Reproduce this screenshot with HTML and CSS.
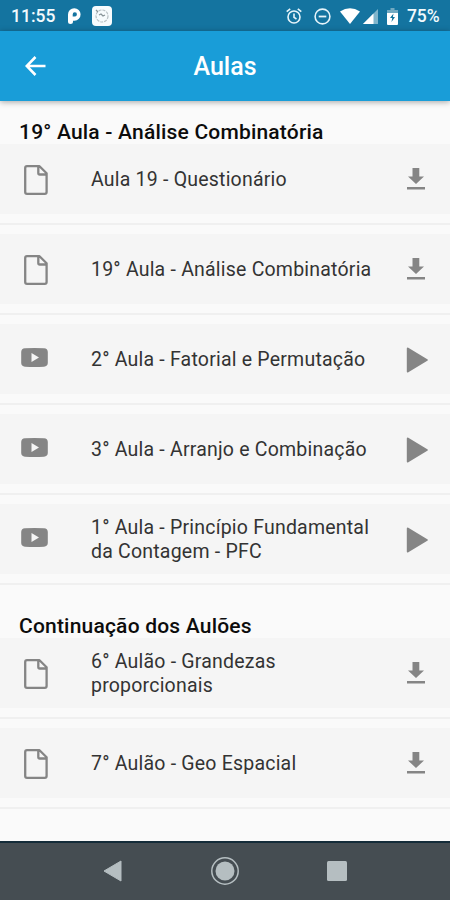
FILE: index.html
```html
<!DOCTYPE html>
<html lang="pt-BR">
<head>
<meta charset="utf-8">
<title>Aulas</title>
<link rel="stylesheet" href="styles.css">
</head>
<body>
<svg class="defs" width="0" height="0" aria-hidden="true">
  <symbol id="doc" viewBox="0 0 24 30"><path d="M3 1.2H15.5L22.6 8.3V27Q22.6 28.8 20.8 28.8H3Q1.2 28.8 1.2 27V3Q1.2 1.2 3 1.2Z M14.3 1.5V8Q14.3 9.5 15.8 9.5H22.3" fill="none" stroke="#858585" stroke-width="2.3" stroke-linejoin="round"/></symbol>
  <symbol id="video" viewBox="0 0 27 19"><path fill-rule="evenodd" d="M4 .3Q13.5-.3 23 .3Q26.7.6 26.8 4V15Q26.7 18.4 23 18.7Q13.5 19.3 4 18.7Q.3 18.4.2 15V4Q.3.6 4 .3ZM10.5 5V14L18 9.5Z" fill="#858585"/></symbol>
  <symbol id="download" viewBox="0 0 18 22"><path d="M5.5 0H12.3V8.5H17L9 16L1 8.5H5.5ZM0 19H18V21.5H0Z" fill="#858585"/></symbol>
  <symbol id="play" viewBox="0 0 22 26"><path d="M1.8 1.5L20.8 13L1.8 24.5Z" fill="#858585" stroke="#858585" stroke-width="2" stroke-linejoin="round"/></symbol>
</svg>
<div class="screen">
  <div class="status">
    <span class="clock">11:55</span>
    <svg class="s-p" viewBox="0 0 13 16"><path fill-rule="evenodd" d="M0 13.5V6.5A6.3 6.3 0 1 1 6.5 12.8H5V13.5A2.5 2.5 0 0 1 0 13.5ZM4.7 8.5H6.5A2.1 2.1 0 1 0 4.7 6.5Z" fill="#fff"/></svg>
    <svg class="s-app" viewBox="0 0 20 20"><rect width="20" height="20" rx="4" fill="#f7fbfd"/><circle cx="10" cy="10" r="6" fill="none" stroke="#b9c1c5" stroke-width="1.2" stroke-dasharray="3 1"/><path d="M4 4L6 6M7 9L9 8L11 10L13 9" fill="none" stroke="#899499" stroke-width="1.3"/></svg>
    <svg class="s-alarm" viewBox="0 0 16 16"><g fill="none" stroke="#e6f4fa" stroke-width="1.6"><circle cx="8" cy="9" r="6"/><path d="M8 5.5V9.3L10.5 11M.7 3.7L4.2.8M15.3 3.7L11.8.8"/></g></svg>
    <svg class="s-dnd" viewBox="0 0 17 17"><g fill="none" stroke="#e6f4fa" stroke-width="1.6"><circle cx="8.5" cy="8.5" r="7.4"/><path d="M4.7 8.5H12.3" stroke-width="1.8"/></g></svg>
    <svg class="s-wifi" viewBox="0 0 20 16"><path d="M0 3.4Q10-3 20 3.4L10 16Z" fill="#fff"/></svg>
    <svg class="s-cell" viewBox="0 0 15 15"><path d="M15 0V15H0Z" fill="#7fb5cc"/><path d="M10.5 4.5V15H0Z" fill="#fff"/></svg>
    <svg class="s-batt" viewBox="0 0 11 17"><path d="M3.5 0H7.5V2H11V5H0V2H3.5Z" fill="#72a9c1"/><path d="M0 5H11V16Q11 17 10 17H1Q0 17 0 16Z" fill="#fff"/><path d="M6.5 5.5L3 10H5.2L4.5 14L8 9H5.9Z" fill="#14739c"/></svg>
    <span class="percent">75%</span>
  </div>
  <header class="appbar">
    <svg class="back" viewBox="0 0 21 20"><path d="M20.5 10H2M10.5 1L1.7 10L10.5 19" fill="none" stroke="#fff" stroke-width="2.6"/></svg>
    <h1>Aulas</h1>
  </header>
  <main>
    <section>
      <h2>19° Aula - Análise Combinatória</h2>
      <ul>
        <li><a class="tile"><svg class="doc"><use href="#doc"/></svg><span>Aula 19 - Questionário</span><svg class="download"><use href="#download"/></svg></a></li>
        <li><a class="tile"><svg class="doc"><use href="#doc"/></svg><span>19° Aula - Análise Combinatória</span><svg class="download"><use href="#download"/></svg></a></li>
        <li><a class="tile"><svg class="video"><use href="#video"/></svg><span>2° Aula - Fatorial e Permutação</span><svg class="play"><use href="#play"/></svg></a></li>
        <li><a class="tile"><svg class="video"><use href="#video"/></svg><span>3° Aula - Arranjo e Combinação</span><svg class="play"><use href="#play"/></svg></a></li>
        <li><a class="tile"><svg class="video"><use href="#video"/></svg><span>1° Aula - Princípio Fundamental<br>da Contagem - PFC</span><svg class="play"><use href="#play"/></svg></a></li>
      </ul>
    </section>
    <section>
      <h2>Continuação dos Aulões</h2>
      <ul>
        <li><a class="tile"><svg class="doc"><use href="#doc"/></svg><span>6° Aulão - Grandezas<br>proporcionais</span><svg class="download"><use href="#download"/></svg></a></li>
        <li><a class="tile"><svg class="doc"><use href="#doc"/></svg><span>7° Aulão - Geo Espacial</span><svg class="download"><use href="#download"/></svg></a></li>
      </ul>
    </section>
  </main>
  <nav class="navbar">
    <svg class="n-back" viewBox="0 0 19 22"><path d="M18 1V21L1 11Z" fill="#b5bec1" stroke="#b5bec1" stroke-linejoin="round"/></svg>
    <svg class="n-home" viewBox="0 0 30 30"><circle cx="15" cy="15" r="13.2" fill="none" stroke="#b5bec1" stroke-width="1.5"/><circle cx="15" cy="15" r="9.5" fill="#b5bec1"/></svg>
    <svg class="n-recent" viewBox="0 0 20 20"><rect width="20" height="20" rx="1.5" fill="#b5bec1"/></svg>
  </nav>
</div>
</body>
</html>
```
FILE: styles.css
```css
* { box-sizing: border-box; margin: 0; padding: 0; }
body { font-family: Roboto, "Liberation Sans", sans-serif; background: #fafafa; }
svg { display: block; flex: none; }
.defs { position: absolute; }
.screen { width: 450px; height: 900px; display: flex; flex-direction: column; overflow: hidden; }

.status { height: 31px; flex: none; background: #1474a0; color: #f2fafd; display: flex; align-items: center; padding: 1px 11px 0 11px; font-size: 17.5px; font-weight: 500; }
.clock { width: 57px; }
.s-p { width: 13px; height: 16px; }
.s-app { width: 20px; height: 20px; margin: -1px 0 0 11px; }
.s-alarm { width: 16px; height: 16px; margin-left: auto; }
.s-dnd { width: 17px; height: 17px; margin-left: 12px; }
.s-wifi { width: 20px; height: 16px; margin-left: 9px; }
.s-cell { width: 15px; height: 15px; margin-left: 3px; }
.s-batt { width: 11px; height: 17px; margin-left: 9px; }
.percent { width: 32px; margin-left: 9px; white-space: nowrap; letter-spacing: -.1px; }

.appbar { height: 70px; flex: none; background: #199dd8; display: grid; grid-template-columns: 46px 1fr 46px; align-items: center; padding-bottom: 1px; box-shadow: 0 1px 6px rgba(0, 0, 0, .35); z-index: 1; }
.back { width: 21px; height: 20px; margin-left: 25px; }
h1 { color: #fff; font-size: 25px; font-weight: 500; text-align: center; line-height: 30px; padding-top: 2px; }

main { flex: 1; min-height: 0; background: #fafafa; }
h2 { height: 43px; padding: 19px 19px 0; font-size: 21px; line-height: 24px; font-weight: 500; letter-spacing: .2px; color: #0c0c0c; white-space: nowrap; }
section + section h2 { height: 44px; padding-top: 20px; }
ul { list-style: none; }
li { height: 90px; display: flex; flex-direction: column; }
li::after { content: ""; height: 2px; margin-top: 9px; background: #f0f0f0; }
.tile { height: 70px; flex: none; background: #f5f5f5; display: grid; grid-template-columns: 71px 1fr 44px; align-items: center; padding-left: 20px; color: #333; font-size: 19.5px; letter-spacing: .21px; line-height: 23.5px; white-space: nowrap; }
.tile span { padding-top: 1px; }
.doc { width: 24px; height: 30px; margin: 2px 0 0 4px; }
.video { width: 27px; height: 19px; margin: -3px 0 0 1px; }
.download { width: 18px; height: 22px; margin-left: 1px; }
.play { width: 22px; height: 26px; margin-top: 2px; }

.navbar { height: 59px; flex: none; background: #454d52; border-top: 2px solid #142c39; display: flex; align-items: center; padding: 0 0 2px 103px; }
.n-back { width: 19px; height: 22px; }
.n-home { width: 30px; height: 30px; margin-left: 88px; }
.n-recent { width: 20px; height: 20px; margin-left: 87px; }
```
